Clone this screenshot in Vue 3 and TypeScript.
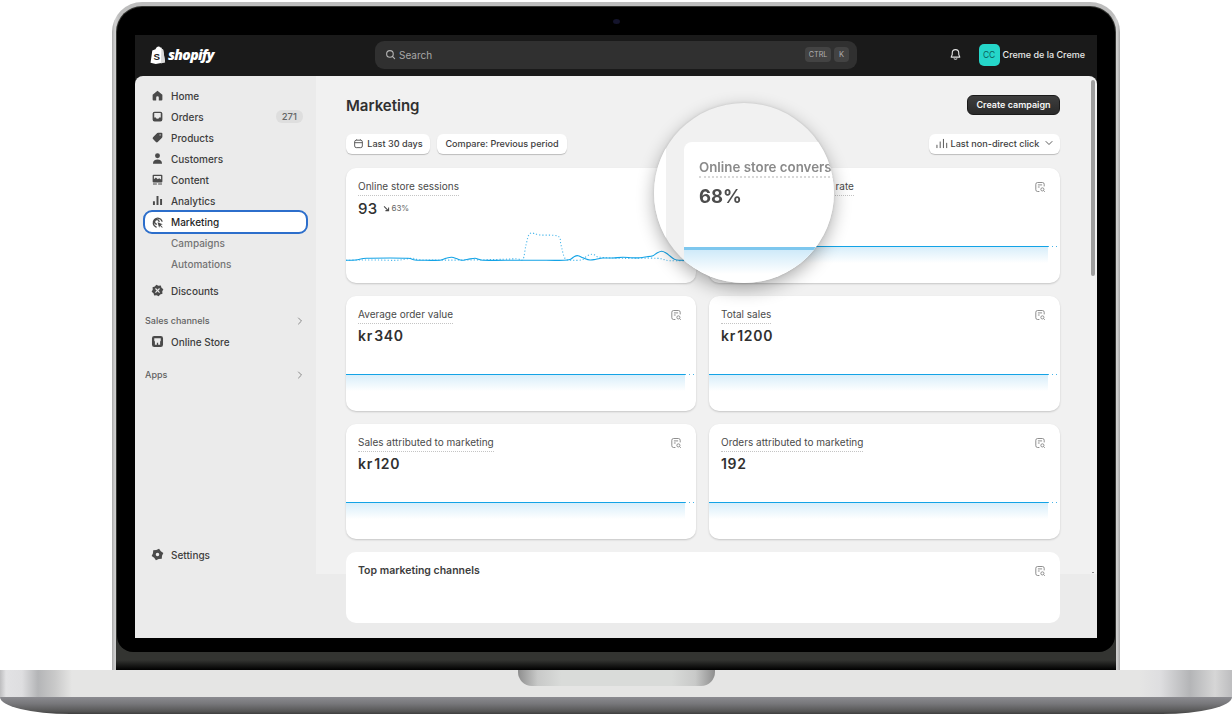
<template>
  <div class="page">
    <div class="lid">
      <div class="bezel">
        <div class="glass">
          <span class="camera" />
          <div class="screen">
            <header class="topbar">
              <div class="brand">
                <svg class="bag" viewBox="0 0 18 20" width="16" height="18">
                  <path d="M2.6 4.8 6.2 3.6C6.8 1.4 8.2.3 9.6.3c1 0 1.5.5 1.9 1.2l1-.2 1.2 2.2 1 .4L17 18.2 6.5 20 .6 18.8Z" fill="#fff" />
                  <path d="M12.8 3.2 14.9 4 17 18.2 12.2 19.6Z" fill="#d8d8d8" />
                  <text x="4" y="15.4" class="bag-s">S</text>
                </svg>
                <span class="wordmark">shopify</span>
              </div>
              <div class="search">
                <svg viewBox="0 0 20 20" width="11" height="11" fill="none" stroke="#b5b5b5" stroke-width="2">
                  <circle cx="9" cy="9" r="6" />
                  <path d="m13.5 13.5 4 4" stroke-linecap="round" />
                </svg>
                <span class="search-text">Search</span>
                <kbd class="key ctrl">CTRL</kbd>
                <kbd class="key">K</kbd>
              </div>
              <div class="account">
                <svg class="bell" viewBox="0 0 20 20" width="13" height="13" fill="none" stroke="#e3e3e3" stroke-width="1.7">
                  <path d="M10 2.5c-3 0-5 2.2-5 5v2.6L3.3 14h13.4L15 10.1V7.5c0-2.8-2-5-5-5Z" stroke-linejoin="round" />
                  <path d="M8 16.5c.5 1 3.5 1 4 0" stroke-linecap="round" />
                </svg>
                <span class="avatar">CC</span>
                <span class="shop-name">Creme de la Creme</span>
              </div>
            </header>

            <div class="body">
              <aside class="sidebar">
                <template v-for="item in navItems" :key="item.label">
                  <div v-if="item.kind === 'section'" class="nav-section" :class="{ apps: item.label === 'Apps' }">
                    <span>{{ item.label }}</span>
                    <svg viewBox="0 0 20 20" width="10" height="10" fill="none" stroke="#8a8a8a" stroke-width="2">
                      <path d="m7 4 6 6-6 6" stroke-linecap="round" stroke-linejoin="round" />
                    </svg>
                  </div>
                  <div
                    v-else
                    class="nav-row"
                    :class="{ active: item.label === 'Marketing', sub: item.kind === 'sub', gap: item.label === 'Discounts', settings: item.label === 'Settings' }"
                  >
                    <svg v-if="item.kind !== 'sub'" class="nav-icon" viewBox="0 0 20 20" width="13" height="13">
                      <path :d="item.fill" fill="#4a4a4a" fill-rule="evenodd" />
                      <path v-if="item.line" :d="item.line" fill="none" stroke="#4a4a4a" stroke-width="2" stroke-linecap="round" />
                    </svg>
                    <span>{{ item.label }}</span>
                    <span v-if="item.badge" class="badge">{{ item.badge }}</span>
                  </div>
                </template>
              </aside>

              <main class="main">
                <div class="heading">
                  <h1>Marketing</h1>
                  <button class="primary">Create campaign</button>
                </div>
                <div class="filters">
                  <button class="chip dates">
                    <svg viewBox="0 0 20 20" width="11" height="11" fill="none" stroke="#4a4a4a" stroke-width="1.6">
                      <rect x="3" y="4" width="14" height="13.5" rx="3" />
                      <path d="M3 8.5h14M6.5 2.5V4M13.5 2.5V4" />
                    </svg>
                    Last 30 days
                  </button>
                  <button class="chip">Compare: Previous period</button>
                  <button class="chip attribution">
                    <svg viewBox="0 0 20 20" width="13" height="13" fill="none" stroke="#4a4a4a" stroke-width="1.4">
                      <path d="M3 17v-5M8 17V7M13 17V3M18 17V9" />
                    </svg>
                    Last non-direct click
                    <svg class="chev" viewBox="0 0 20 20" width="10" height="10" fill="none" stroke="#4a4a4a" stroke-width="1.8">
                      <path d="m4 7 6 6 6-6" stroke-linecap="round" stroke-linejoin="round" />
                    </svg>
                  </button>
                </div>

                <div class="grid">
                  <section v-for="card in cards" :key="card.title" class="card">
                    <div class="card-head">
                      <span class="card-title">{{ card.title }}</span>
                      <svg class="report" viewBox="0 0 20 20" width="12" height="12" fill="none" stroke="#8a8a8a" stroke-width="1.6">
                        <path d="M9 17.5H6a3 3 0 0 1-3-3v-9a3 3 0 0 1 3-3h8a3 3 0 0 1 3 3V9" />
                        <path d="M6.5 6.5h7M6.5 10h3" />
                        <circle cx="14" cy="14" r="2.6" />
                        <path d="m16 16 2 2" />
                      </svg>
                    </div>
                    <div class="value-row" :class="{ light: card.trend }">
                      <span v-if="card.value" class="value">{{ card.value }}</span>
                      <span v-if="card.trend" class="trend">
                        <svg viewBox="0 0 10 10" width="7" height="7" fill="none" stroke="#4a4a4a" stroke-width="1.5">
                          <path d="m1.5 2 6 6M8 3.5V8H3.5" />
                        </svg>
                        {{ card.trend }}
                      </span>
                    </div>
                    <svg v-if="card.trend" class="spark" viewBox="0 0 351 60" width="351" height="60" fill="none">
                      <path :d="dottedPath" stroke="#4db8ec" stroke-width="1.1" stroke-dasharray="1.2 2" />
                      <path :d="solidPath" stroke="#13a3e6" stroke-width="1.1" />
                    </svg>
                    <svg v-else class="flat" viewBox="0 0 351 37" width="351" height="37" fill="none">
                      <defs>
                        <linearGradient :id="gradientId(card.title)" x1="0" x2="0" y1="0" y2="1">
                          <stop offset="0" stop-color="#d8eefa" />
                          <stop offset="0.85" stop-color="#fff" />
                        </linearGradient>
                      </defs>
                      <rect x="0" y="1" width="339" height="19" :fill="`url(#${gradientId(card.title)})`" />
                      <path d="M0 .5h339" stroke="#13a3e6" stroke-width="1" />
                      <path d="M339 .5h12" stroke="#45b3e8" stroke-width="1" stroke-dasharray="1 3" />
                    </svg>
                  </section>

                  <section class="card wide">
                    <div class="card-head">
                      <span class="card-title strong">Top marketing channels</span>
                      <svg class="report" viewBox="0 0 20 20" width="12" height="12" fill="none" stroke="#8a8a8a" stroke-width="1.6">
                        <path d="M9 17.5H6a3 3 0 0 1-3-3v-9a3 3 0 0 1 3-3h8a3 3 0 0 1 3 3V9" />
                        <path d="M6.5 6.5h7M6.5 10h3" />
                        <circle cx="14" cy="14" r="2.6" />
                        <path d="m16 16 2 2" />
                      </svg>
                    </div>
                  </section>
                </div>
                <span class="scrollbar" />
                <span class="scroll-tick" />
              </main>
            </div>
          </div>
        </div>
      </div>

      <!-- loupe over the conversion rate card -->
      <div class="lens">
        <div class="lens-side" />
        <div class="lens-card">
          <div class="lens-title">Online store convers</div>
          <div class="lens-value">68%</div>
          <div class="lens-line" />
          <div class="lens-fill" />
        </div>
      </div>
    </div>

    <div class="base">
      <div class="deck">
        <div class="hinge" />
      </div>
      <div class="underside" />
    </div>
  </div>
</template>

<script setup lang="ts">
type NavItem = {
  label: string;
  kind: 'main' | 'sub' | 'section';
  fill: string;
  line?: string;
  badge?: string;
};

// toothed outline, used for the gear and the discount badge
const toothed = (teeth: number, outer: number, inner: number, hole: string) => {
  const pts: string[] = [];
  const step = Math.PI / teeth;
  for (let i = 0; i < teeth * 2; i++) {
    const r = i % 2 === 0 ? outer : inner;
    const a = i * step - step / 2;
    pts.push(`${(10 + r * Math.cos(a)).toFixed(2)} ${(10 + r * Math.sin(a)).toFixed(2)}`);
  }
  return `M${pts.join('L')}Z${hole}`;
};

const navItems: NavItem[] = [
  { label: 'Home', kind: 'main', fill: 'M10 2.5 2.5 8.8V16A1.5 1.5 0 0 0 4 17.5h4V13a2 2 0 0 1 4 0v4.5h4a1.5 1.5 0 0 0 1.5-1.5V8.8Z' },
  { label: 'Orders', kind: 'main', badge: '271', fill: 'M5.5 2.5h9a3 3 0 0 1 3 3v9a3 3 0 0 1-3 3h-9a3 3 0 0 1-3-3v-9a3 3 0 0 1 3-3ZM5 4.8h10v6.7h-2.5a2.5 2 0 0 1-5 0H5Z' },
  { label: 'Products', kind: 'main', fill: 'M11 2.5h5A1.5 1.5 0 0 1 17.5 4v5a2 2 0 0 1-.6 1.4l-6.5 6.5a2 2 0 0 1-2.8 0l-4.500-4.500a2 2 0 0 1 0-2.800L9.600 3.100A2 2 0 0 1 11 2.500ZM14 5a1 1 0 1 0 0 2 1 1 0 0 0 0-2Z' },
  { label: 'Customers', kind: 'main', fill: 'M10 2a3.8 3.8 0 1 1 0 7.6A3.8 3.8 0 0 1 10 2ZM3 18c0-4.5 3-6.5 7-6.5s7 2 7 6.5Z' },
  { label: 'Content', kind: 'main', fill: 'M4 2.5h12A1.5 1.5 0 0 1 17.5 4v9a1.5 1.5 0 0 1-1.5 1.5H4A1.5 1.5 0 0 1 2.5 13V4A1.5 1.5 0 0 1 4 2.5ZM4.5 4.5v5l3-2.5 3 2.5 2-1.5 3 2V4.5ZM3 16h6v1.8H3ZM11 16h6v1.8h-6Z' },
  { label: 'Analytics', kind: 'main', fill: 'M3 11h3v6H3ZM8.5 3h3v14h-3ZM14 7.5h3V17h-3Z' },
  {
    label: 'Marketing',
    kind: 'main',
    fill: 'M10 9.5 18 12.5 14.8 14 18 17.2 17 18.2 13.8 15 12.5 18.2Z',
    line: 'M8 17A7 7 0 1 1 17 8M8.5 12.5A3.5 3.5 0 1 1 12.5 8.5',
  },
  { label: 'Campaigns', kind: 'sub', fill: '' },
  { label: 'Automations', kind: 'sub', fill: '' },
  { label: 'Discounts', kind: 'main', fill: toothed(8, 9.2, 7.4, 'M7.5 6.2l2.5 2.5 2.5-2.5 1.3 1.3-2.5 2.5 2.5 2.5-1.3 1.3-2.5-2.5-2.5 2.5-1.3-1.3 2.5-2.5-2.5-2.5Z') },
  { label: 'Sales channels', kind: 'section', fill: '' },
  { label: 'Online Store', kind: 'main', fill: 'M5 1.5h10A3.5 3.5 0 0 1 18.5 5v10a3.5 3.5 0 0 1-3.5 3.500H5A3.500 3.500 0 0 1 1.500 15V5A3.500 3.500 0 0 1 5 1.500ZM5 5v3.500a1.700 1.700 0 0 0 1 1.500v5h3v-3h2v3h3v-5a1.700 1.700 0 0 0 1-1.500V5Z' },
  { label: 'Apps', kind: 'section', fill: '' },
  { label: 'Settings', kind: 'main', fill: toothed(6, 9.3, 7.2, 'M10 7.3a2.7 2.7 0 1 0 0 5.4 2.7 2.7 0 0 0 0-5.4Z') },
];

const cards = [
  { title: 'Online store sessions', value: '93', trend: '63%' },
  // the figure of this card sits under the loupe
  { title: 'Online store conversion rate', value: '', trend: '' },
  { title: 'Average order value', value: 'kr 340', trend: '' },
  { title: 'Total sales', value: 'kr 1200', trend: '' },
  { title: 'Sales attributed to marketing', value: 'kr 120', trend: '' },
  { title: 'Orders attributed to marketing', value: '192', trend: '' },
];

const gradientId = (title: string) => `fill-${title.replace(/\s+/g, '-').toLowerCase()}`;

// catmull-rom through the chart points
const smooth = (pts: number[][]) => {
  let d = `M${pts[0][0]} ${pts[0][1]}`;
  for (let i = 0; i < pts.length - 1; i++) {
    const p0 = pts[Math.max(i - 1, 0)];
    const p1 = pts[i];
    const p2 = pts[i + 1];
    const p3 = pts[Math.min(i + 2, pts.length - 1)];
    const c1x = p1[0] + (p2[0] - p0[0]) / 6;
    const c1y = p1[1] + (p2[1] - p0[1]) / 6;
    const c2x = p2[0] - (p3[0] - p1[0]) / 6;
    const c2y = p2[1] - (p3[1] - p1[1]) / 6;
    d += `C${c1x.toFixed(1)} ${c1y.toFixed(1)} ${c2x.toFixed(1)} ${c2y.toFixed(1)} ${p2[0]} ${p2[1]}`;
  }
  return d;
};

const solidPath = smooth([
  [0, 37.3], [10, 37], [20.7, 35.3], [44, 35], [62, 35.3], [69, 37], [80, 37.3], [94, 37.3], [100, 35.3], [105.7, 34.3],
  [111, 35.8], [115.7, 37.2], [122, 36.2], [129, 35.3], [133, 36.4], [137, 37.3], [160, 37.3], [200, 37.3], [218, 37.3],
  [224, 36.6], [228, 33.8], [232, 32.7], [237, 34.8], [244, 37], [250, 36.2], [257, 35], [267, 35], [277, 34.3], [286, 34.8],
  [294, 34.7], [301, 33.8], [307, 32.7], [311, 30], [315.7, 28.3], [320, 30], [324, 33], [328, 36], [333, 37.2], [351, 37.3],
]);

const dottedPath = smooth([
  [0, 37.3], [14, 37], [31, 37], [50.7, 37.3], [66, 35.3], [77, 37], [120, 37], [157, 36.3], [171, 35.7], [177, 36.3],
  [180, 22], [184, 10.5], [194, 12], [212, 13.2], [215, 22], [219, 35.3], [227, 37.3], [236, 36.8], [241, 33], [246, 31.3],
  [250, 32.5], [254, 34.3], [277, 35.3], [311, 35.3], [324, 37.7], [351, 37.3],
]);
</script>

<style>
html,
body {
  margin: 0;
  background: #fff;
}
</style>

<style scoped>
.page {
  width: 1232px;
  height: 715px;
  overflow: hidden;
  display: flex;
  flex-direction: column;
  align-items: center;
  font-family: Inter, "Liberation Sans", sans-serif;
  color: #303030;
  background: #fff;
}

/* laptop shell */
.lid {
  position: relative;
  box-sizing: border-box;
  width: 1008px;
  height: 668px;
  margin-top: 2px;
  padding: 4px 4px 0;
  flex-shrink: 0;
  border-radius: 30px 30px 0 0;
  background: linear-gradient(90deg, #a9a9a9, #d0d0d0 3px, #bdbdbd 7px, #bdbdbd 1001px, #d0d0d0 1005px, #a9a9a9);
}

.bezel {
  box-sizing: border-box;
  height: 100%;
  padding-top: 1px;
  border-radius: 26px 26px 0 0;
  background: linear-gradient(#333431 98.5%, #000);
}

.glass {
  position: relative;
  box-sizing: border-box;
  height: 645px;
  margin: 0 1px;
  padding: 28px 18px 14px;
  border-radius: 25px 25px 16px 16px;
  background: #000;
}

.camera {
  position: absolute;
  left: 496px;
  top: 12px;
  width: 7px;
  height: 5px;
  border-radius: 50%;
  background: #14142c;
}

.screen {
  display: flex;
  flex-direction: column;
  height: 603px;
  background: #1a1a1a;
}

/* top bar */
.topbar {
  display: flex;
  align-items: center;
  box-sizing: border-box;
  height: 41px;
  padding-bottom: 2px;
  flex-shrink: 0;
}

.brand {
  display: flex;
  align-items: center;
  gap: 2px;
  width: 240px;
  box-sizing: border-box;
  padding-left: 15px;
}

.bag-s {
  font-family: "Liberation Sans", sans-serif;
  font-size: 11px;
  font-weight: 700;
  fill: #1a1a1a;
}

.wordmark {
  font-family: "Open Sans", sans-serif;
  font-size: 14px;
  font-weight: 800;
  font-style: italic;
  letter-spacing: -0.7px;
  color: #fff;
}

.search {
  display: flex;
  align-items: center;
  gap: 3px;
  box-sizing: border-box;
  width: 482px;
  height: 28px;
  padding: 0 8px 0 10px;
  border-radius: 9px;
  background: #303030;
}

.search-text {
  flex: 1;
  font-size: 10px;
  color: #a8a8a8;
}

.key {
  height: 15px;
  padding: 0 5px;
  border-radius: 4px;
  background: #434343;
  color: #b0b0b0;
  font-family: Inter, sans-serif;
  font-size: 7.5px;
  line-height: 15px;
}

.key.ctrl {
  padding: 0 3.5px;
  font-size: 7.2px;
}

.account {
  display: flex;
  align-items: center;
  margin-left: auto;
  padding-right: 12px;
}

.bell {
  margin-right: 17px;
}

.avatar {
  display: flex;
  align-items: center;
  justify-content: center;
  width: 21px;
  height: 22px;
  margin-right: 3px;
  border-radius: 5px;
  background: #25d6c9;
  color: #0b5f5a;
  font-size: 8.5px;
}

.shop-name {
  font-size: 9px;
  font-weight: 500;
  color: #e8e8e8;
}

/* app body */
.body {
  flex: 1;
  display: flex;
  min-height: 0;
  overflow: hidden;
  border-radius: 8px 8px 0 0;
}

.sidebar {
  display: flex;
  flex-direction: column;
  box-sizing: border-box;
  width: 181px;
  padding: 9px 8px 73px;
  background: #ebebeb;
  font-size: 10px;
  font-weight: 500;
  color: #3d3d3d;
}

.nav-row {
  display: flex;
  align-items: center;
  gap: 7px;
  box-sizing: border-box;
  height: 21px;
  padding: 0 5px 0 8px;
}

.nav-icon {
  flex-shrink: 0;
}

.nav-row.sub {
  padding-left: 28px;
  color: #737373;
}

.nav-row.gap {
  margin-top: 6px;
}

.nav-row.active {
  height: 24px;
  margin: -1px 0 -2px;
  padding-left: 6px;
  border: 2px solid #2c6ecb;
  border-radius: 9px;
  background: #fff;
  color: #1f1f1f;
}

.nav-row.settings {
  margin-top: auto;
}

.badge {
  margin-left: auto;
  padding: 1px 6px;
  border-radius: 6px;
  background: #dedede;
  color: #666;
  font-size: 9.5px;
}

.nav-section {
  display: flex;
  align-items: center;
  justify-content: space-between;
  box-sizing: border-box;
  height: 21px;
  margin-top: 9px;
  padding: 0 3px 0 2px;
  font-size: 9px;
  color: #616161;
}

.nav-section.apps {
  margin-top: 12px;
}

.main {
  position: relative;
  flex: 1;
  box-sizing: border-box;
  padding: 0 37px 0 30px;
  overflow: hidden;
  background: linear-gradient(#f1f1f1 498px, #ebebeb 498px);
}

.heading {
  display: flex;
  align-items: center;
  justify-content: space-between;
  height: 20px;
  padding-top: 19px;
}

h1 {
  margin: 0;
  font-size: 15px;
  font-weight: 600;
  color: #303030;
}

.primary {
  box-sizing: border-box;
  width: 93px;
  height: 20px;
  padding: 0 0 2px;
  border: 1px solid #1a1a1a;
  border-radius: 6px;
  background: linear-gradient(#3e3e3e, #2a2a2a);
  color: #f5f5f5;
  font-family: inherit;
  font-size: 9px;
  font-weight: 600;
}

.filters {
  display: flex;
  gap: 7px;
  margin-top: 19px;
}

.chip {
  display: flex;
  align-items: center;
  justify-content: center;
  gap: 3px;
  height: 20px;
  width: 130px;
  padding: 0 0 2px;
  border: 0;
  border-radius: 6px;
  background: #fff;
  box-shadow: 0 1px 1px rgba(0, 0, 0, 0.22);
  color: #3d3d3d;
  font-family: inherit;
  font-size: 9.1px;
  font-weight: 500;
}

.chip.dates {
  width: 84px;
}

.attribution {
  width: 131px;
  margin-left: auto;
}

.chev {
  margin-left: 2px;
}

.grid {
  display: grid;
  grid-template-columns: 350px 351px;
  grid-auto-rows: 115px;
  gap: 13px;
  margin-top: 14px;
  padding-bottom: 15px;
}

.card {
  position: relative;
  display: flex;
  flex-direction: column;
  overflow: hidden;
  border-radius: 10px;
  background: #fff;
  box-shadow: 0 1px 2px rgba(0, 0, 0, 0.18);
}

.card.wide {
  grid-column: 1 / 3;
  height: 71px;
  box-shadow: none;
}

.card-head {
  display: flex;
  align-items: flex-start;
  justify-content: space-between;
  padding: 12px 14px 0 12px;
}

.report {
  margin-top: 1px;
}

.card-title {
  padding-bottom: 2px;
  border-bottom: 1px dotted #c4c4c4;
  font-size: 10px;
  line-height: 13px;
  font-weight: 400;
  color: #4a4a4a;
}

.card-title.strong {
  border: 0;
  font-size: 10.5px;
  font-weight: 600;
  color: #3d3d3d;
}

.value-row {
  display: flex;
  align-items: center;
  gap: 6px;
  padding: 0 12px;
  height: 22px;
}

.value {
  font-size: 14px;
  font-weight: 600;
  letter-spacing: 0.7px;
  word-spacing: -3px;
  color: #303030;
}

.value-row.light {
  padding-top: 1px;
}

.value-row.light .value {
  font-size: 15px;
  font-weight: 500;
  letter-spacing: 0.3px;
}

.trend {
  display: flex;
  align-items: center;
  gap: 1px;
  font-size: 8px;
  color: #666;
}

.spark,
.flat {
  position: absolute;
  left: 0;
  bottom: 0;
}

.scrollbar {
  position: absolute;
  right: 2px;
  top: 4px;
  width: 4px;
  height: 196px;
  border-radius: 2px;
  background: #9d9d9d;
}

.scroll-tick {
  position: absolute;
  right: 3px;
  top: 496px;
  width: 2px;
  height: 1px;
  background: #8a8a8a;
}

/* loupe */
.lens {
  position: absolute;
  left: 542px;
  top: 101px;
  display: flex;
  gap: 18px;
  box-sizing: border-box;
  width: 180px;
  height: 180px;
  padding-top: 39px;
  overflow: hidden;
  border-radius: 50%;
  background: #f1f1f1;
  box-shadow: 0 6px 18px rgba(0, 0, 0, 0.32), 0 0 3px rgba(0, 0, 0, 0.12);
}

.lens-side {
  width: 12px;
  flex-shrink: 0;
  margin-top: 5px;
  background: #fff;
}

.lens-card {
  flex: 1;
  min-width: 0;
  box-sizing: border-box;
  padding-top: 17px;
  border-radius: 8px 0 0 0;
  background: #fff;
  white-space: nowrap;
}

.lens-title {
  margin-left: 15px;
  border-bottom: 2px dotted #d8d8d8;
  font-size: 13.3px;
  line-height: 17px;
  font-weight: 600;
  color: #8a8a8a;
  filter: blur(0.5px);
}

.lens-value {
  margin: 6px 0 0 15px;
  font-size: 18.5px;
  line-height: 24px;
  font-weight: 700;
  color: #4d4d4d;
  filter: blur(0.6px);
}

.lens-line {
  height: 3px;
  margin-top: 39px;
  background: #7ec7ee;
}

.lens-fill {
  height: 24px;
  background: linear-gradient(#cfeaf9, #fff);
}

/* base */
.base {
  width: 1232px;
  flex-shrink: 0;
}

.deck {
  height: 27px;
  background: linear-gradient(
    90deg,
    #bdbdbf 0,
    #e2e2e4 6px,
    #dedee0 22px,
    #b4b5b7 38px,
    #c9c9c9 55px,
    #e5e5e4 72px,
    #e5e5e4 1140px,
    #dedee0 1160px,
    #b4b5b7 1190px,
    #d6d6d6 1215px,
    #bdbdbf 1232px
  );
}

.hinge {
  width: 197px;
  height: 16px;
  margin: 0 auto;
  border-radius: 0 0 14px 14px;
  background: linear-gradient(90deg, #8e8e8e, #c8c9c8 10%, #d9dbd9 22%, #d9dbd9 78%, #c8c9c8 90%, #8e8e8e);
}

.underside {
  height: 17px;
  border-radius: 0 0 70px 70px / 0 0 17px 17px;
  background: linear-gradient(#8b8b90, #77777a 40%, #555 85%, #3e3e3e);
}
</style>
